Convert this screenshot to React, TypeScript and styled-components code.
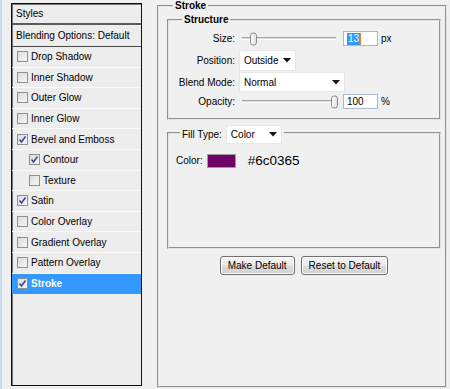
import styled, { createGlobalStyle } from 'styled-components';

const GlobalStyle = createGlobalStyle`
  html, body { margin: 0; padding: 0; }
  body {
    background: #f0f0f0;
    font-family: "Liberation Sans", Arial, sans-serif;
    font-size: 10px;
    color: #000;
  }
`;

type StyleItem = { label: string; checked?: boolean; indent?: boolean; selected?: boolean };

const styleItems: StyleItem[] = [
  { label: 'Drop Shadow' },
  { label: 'Inner Shadow' },
  { label: 'Outer Glow' },
  { label: 'Inner Glow' },
  { label: 'Bevel and Emboss', checked: true },
  { label: 'Contour', checked: true, indent: true },
  { label: 'Texture', indent: true },
  { label: 'Satin', checked: true },
  { label: 'Color Overlay' },
  { label: 'Gradient Overlay' },
  { label: 'Pattern Overlay' },
  { label: 'Stroke', checked: true, selected: true },
];

function CheckBox({ checked }: { checked?: boolean }) {
  return (
    <Box>
      {checked && (
        <svg width="9" height="9" viewBox="0 0 9 9">
          <path d="M1.5 4.5 L3.5 7 L7.5 1.5" fill="none" stroke="#34429e" strokeWidth="1.5" />
        </svg>
      )}
    </Box>
  );
}

function Slider({ value, max }: { value: number; max: number }) {
  return (
    <Track>
      <Thumb style={{ left: Math.round((value / max) * 87) }} />
    </Track>
  );
}

function Caret() {
  return (
    <svg width="8" height="5" viewBox="0 0 8 5">
      <path d="M0 0 H8 L4 4.5 Z" fill="#111" />
    </svg>
  );
}

export default function App() {
  return (
    <>
      <GlobalStyle />
      <Page>
        <StylesPanel>
          <PanelHeader $thick>Styles</PanelHeader>
          <PanelHeader>Blending Options: Default</PanelHeader>
          {styleItems.map((item) => (
            <StyleRow key={item.label} $indent={item.indent} $selected={item.selected}>
              <CheckBox checked={item.checked} />
              {item.label}
            </StyleRow>
          ))}
        </StylesPanel>

        <Group>
          <Legend $offset={6}>Stroke</Legend>

          <Structure>
            <Legend $offset={13}>Structure</Legend>
            <Fields>
              <FieldRow $h={21}>
                <FieldLabel>Size:</FieldLabel>
                <Slider value={13} max={150} />
                <NumberBox>
                  <Selected>13</Selected>
                </NumberBox>
                <Unit>px</Unit>
              </FieldRow>
              <FieldRow $h={22}>
                <FieldLabel>Position:</FieldLabel>
                <Select $w={57} $h={21}>
                  Outside
                  <Caret />
                </Select>
              </FieldRow>
              <FieldRow $h={22}>
                <FieldLabel>Blend Mode:</FieldLabel>
                <Select $w={106} $h={20}>
                  Normal
                  <Caret />
                </Select>
              </FieldRow>
              <FieldRow $h={17}>
                <FieldLabel>Opacity:</FieldLabel>
                <Slider value={100} max={98} />
                <NumberBox>100</NumberBox>
                <Unit>%</Unit>
              </FieldRow>
            </Fields>
          </Structure>

          <FillGroup>
            <FillLegend>
              Fill Type:
              <Select $w={56} $h={19}>
                Color
                <Caret />
              </Select>
            </FillLegend>
            <ColorRow>
              Color:
              <Swatch $color="#6c0365" />
              <HexText>#6c0365</HexText>
            </ColorRow>
          </FillGroup>

          <ButtonRow>
            <Button>Make Default</Button>
            <Button>Reset to Default</Button>
          </ButtonRow>
        </Group>
      </Page>
    </>
  );
}

const Page = styled.div`
  display: flex;
  align-items: flex-start;
  height: 389px;
  box-sizing: border-box;
  border-left: 2px solid #c9dbef;
  padding-left: 9px;
  overflow: hidden;
`;

const StylesPanel = styled.div`
  box-sizing: border-box;
  margin-top: 3px;
  width: 131px;
  height: 383px;
  border: 1px solid #111;
  box-shadow: inset 1px 1px 0 #777;
  background: #ededed;
  display: flex;
  flex-direction: column;
`;

const PanelHeader = styled.div<{ $thick?: boolean }>`
  box-sizing: border-box;
  height: ${(p) => (p.$thick ? 21 : 22)}px;
  display: flex;
  align-items: center;
  padding-left: 4px;
  border-bottom: ${(p) => (p.$thick ? '2px solid #5a5a5a' : '1px solid #4a4a4a')};
`;

const StyleRow = styled.div<{ $indent?: boolean; $selected?: boolean }>`
  box-sizing: border-box;
  height: 20.6px;
  display: flex;
  align-items: center;
  gap: 3px;
  padding-left: ${(p) => (p.$indent ? 17 : 5)}px;
  border-bottom: 1px solid ${(p) => (p.$selected ? '#3399ff' : '#f9f9f9')};
  background: ${(p) => (p.$selected ? '#3399ff' : 'transparent')};
  color: ${(p) => (p.$selected ? '#fff' : '#000')};
  font-weight: ${(p) => (p.$selected ? 700 : 400)};
`;

const Box = styled.span`
  box-sizing: border-box;
  width: 11px;
  height: 11px;
  border: 1px solid #8e8f8f;
  background: linear-gradient(135deg, #dcdcdc 0%, #f6f6f6 100%);
  display: flex;
  align-items: center;
  justify-content: center;
  flex-shrink: 0;
`;

const Group = styled.fieldset`
  box-sizing: border-box;
  margin: 0 0 0 15px;
  width: 290px;
  height: 388px;
  padding: 0 4px 0 8px;
  border: 2px groove #e4e4e4;
  min-width: 0;
`;

const Legend = styled.legend<{ $offset: number }>`
  margin-left: ${(p) => p.$offset}px;
  padding: 0 2px;
  font-weight: 700;
  line-height: 11px;
`;

const Structure = styled.fieldset`
  box-sizing: border-box;
  margin: 3px 0 0;
  height: 106px;
  padding: 0;
  border: 2px groove #e4e4e4;
  min-width: 0;
`;

const Fields = styled.div`
  padding-top: 3px;
  display: flex;
  flex-direction: column;
`;

const FieldRow = styled.div<{ $h: number }>`
  display: flex;
  align-items: center;
  height: ${(p) => p.$h}px;
`;

const FieldLabel = styled.span`
  width: 66px;
  margin-right: 4px;
  text-align: right;
  flex-shrink: 0;
`;

const Track = styled.div`
  position: relative;
  box-sizing: border-box;
  margin-left: 3px;
  width: 94px;
  height: 3px;
  border-top: 1px solid #a3a3a3;
  border-bottom: 1px solid #fff;
  background: #dcdcdc;
`;

const Thumb = styled.span`
  position: absolute;
  top: 50%;
  width: 7px;
  height: 13px;
  box-sizing: border-box;
  transform: translateY(-50%);
  border: 1px solid #8a8a8a;
  border-radius: 3px;
  background: linear-gradient(90deg, #ffffff, #dedede);
`;

const NumberBox = styled.div`
  box-sizing: border-box;
  margin-left: 7px;
  width: 35px;
  height: 15px;
  padding-left: 3px;
  display: flex;
  align-items: center;
  background: #fff;
  border: 1px solid #abb9cd;
`;

const Selected = styled.span`
  background: #3399ff;
  color: #fff;
  line-height: 12px;
  padding: 0 1px;
  border-right: 1px solid #e08a2c;
`;

const Unit = styled.span`
  margin-left: 3px;
`;

const Select = styled.div<{ $w: number; $h: number }>`
  box-sizing: border-box;
  width: ${(p) => p.$w}px;
  height: ${(p) => p.$h}px;
  padding: 0 4px 0 4px;
  display: flex;
  align-items: center;
  justify-content: space-between;
  background: #fff;
  border: 1px solid #e6e6e6;
  font-weight: 400;
`;

const FillGroup = styled.fieldset`
  box-sizing: border-box;
  margin: 1px 0 0;
  height: 128px;
  padding: 0;
  border: 2px groove #e4e4e4;
  min-width: 0;
`;

const FillLegend = styled.legend`
  margin-left: 11px;
  padding: 4px 2px 0;
  display: flex;
  align-items: center;
  gap: 4px;
`;

const ColorRow = styled.div`
  margin-top: 8px;
  padding-left: 7px;
  height: 17px;
  display: flex;
  align-items: center;
`;

const Swatch = styled.span<{ $color: string }>`
  box-sizing: border-box;
  margin-left: 4px;
  width: 29px;
  height: 14px;
  background: ${(p) => p.$color};
  border: 1px solid #9c9c9c;
`;

const HexText = styled.span`
  margin-left: 12px;
  font-size: 13.5px;
`;

const ButtonRow = styled.div`
  margin-top: 7px;
  display: flex;
  justify-content: center;
  gap: 6px;
`;

const Button = styled.button`
  box-sizing: border-box;
  height: 19px;
  padding: 0 7px;
  font-family: "Liberation Sans", Arial, sans-serif;
  font-size: 10px;
  color: #000;
  border: 1px solid #707070;
  border-radius: 3px;
  background: linear-gradient(#f4f4f4 0%, #ebebeb 48%, #dcdcdc 52%, #d2d2d2 100%);
  box-shadow: inset 0 0 0 1px #fcfcfc;
`;
